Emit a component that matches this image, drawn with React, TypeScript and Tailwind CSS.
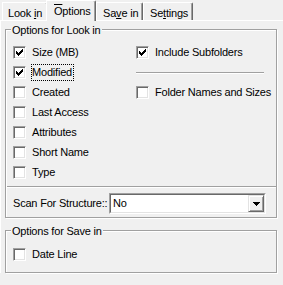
import React from 'react';

const CheckBox: React.FC<{ checked?: boolean }> = ({ checked }) => (
  <span className="relative mt-[4px] box-border block h-[13px] w-[13px] shrink-0 border border-t-[#a0a0a0] border-l-[#a0a0a0] border-r-white border-b-white bg-white shadow-[inset_1px_1px_0_#696969,inset_-1px_-1px_0_#e3e3e3]">
    {checked && (
      <svg className="absolute left-[2px] top-[2px]" width="7" height="7" viewBox="0 0 7 7" shapeRendering="crispEdges">
        <path d="M0 2h1v3H0zM1 3h1v3H1zM2 4h1v3H2zM3 3h1v3H3zM4 2h1v3H4zM5 1h1v3H5zM6 0h1v3H6z" fill="#000" />
      </svg>
    )}
  </span>
);

const Option: React.FC<{ label: React.ReactNode; checked?: boolean; focused?: boolean }> = ({ label, checked, focused }) => (
  <div className="flex h-[20px] items-start">
    <CheckBox checked={checked} />
    {focused ? (
      <span className="ml-[5px] mt-[2px] border border-dotted border-black pr-[1px] leading-[15px] whitespace-nowrap">{label}</span>
    ) : (
      <span className="ml-[6px] leading-[20px] whitespace-nowrap">{label}</span>
    )}
  </div>
);

const Separator: React.FC<{ className?: string }> = ({ className }) => (
  <div className={`box-border h-[2px] border-t border-b border-t-[#a0a0a0] border-b-white ${className ?? ''}`} />
);

const GroupBox: React.FC<{ title: string; className?: string; children: React.ReactNode }> = ({ title, className, children }) => (
  <div className={`relative box-border w-[272px] border border-[#a0a0a0] shadow-[inset_1px_1px_0_#fff,1px_1px_0_#fff] ${className ?? ''}`}>
    <span className="absolute left-[5px] top-[-6px] bg-[#f0f0f0] px-[1px] leading-[13px] whitespace-nowrap">{title}</span>
    {children}
  </div>
);

const tabBase =
  'box-border border-l border-t border-r border-l-white border-t-white border-r-[#696969] rounded-tr-[2px] pt-[4px] leading-[13px] whitespace-nowrap shadow-[inset_-1px_0_0_#a0a0a0]';

export default function App() {
  return (
    <div className="h-[285px] w-[283px] overflow-hidden bg-[#f0f0f0] font-['Liberation_Sans',Arial,sans-serif] text-[11px] leading-[13px] tracking-[-0.2px] text-black">
      {/* tabs */}
      <div className="flex h-[21px] items-end border-b border-white pl-[2px]">
        <div className={`${tabBase} h-[18px] w-[46px] pl-[5px]`}>
          Look <span className="underline">i</span>n
        </div>
        <div className={`${tabBase} relative z-10 -mb-[1px] -ml-[2px] h-[21px] w-[50px] bg-[#f0f0f0] pl-[7px]`}>
          <span className="overline">O</span>ptions
        </div>
        <div className={`${tabBase} h-[18px] w-[47px] pl-[6px]`}>
          Sa<span className="underline">v</span>e in
        </div>
        <div className={`${tabBase} h-[18px] w-[50px] pl-[6px]`}>
          Se<span className="underline">t</span>tings
        </div>
      </div>

      {/* page */}
      <div className="border-l border-white pl-[4px] pt-[8px]">
        <GroupBox title="Options for Look in" className="pb-[3px] pt-[12px]">
          <div className="flex">
            <div className="w-[123px] pl-[7px]">
              <Option label="Size (MB)" checked />
              <Option label="Modified" checked focused />
              <Option label="Created" />
              <Option label="Last Access" />
              <Option label="Attributes" />
              <Option label="Short Name" />
              <Option label="Type" />
            </div>
            <div className="w-[128px] pl-[7px]">
              <Option label="Include Subfolders" checked />
              <div className="h-[20px] pt-[10px]">
                <Separator className="w-[128px]" />
              </div>
              <Option label="Folder Names and Sizes" />
            </div>
          </div>
          <Separator className="ml-[1px] mt-[4px]" />
          <div className="mt-[5px] flex h-[21px] items-center pl-[7px]">
            <span className="w-[96px] whitespace-nowrap">Scan For Structure::</span>
            <div className="box-border h-[21px] w-[157px] border border-t-[#a0a0a0] border-l-[#a0a0a0] border-r-white border-b-white">
              <div className="box-border flex h-full border border-t-[#696969] border-l-[#696969] border-r-[#e3e3e3] border-b-[#e3e3e3] bg-white">
                <span className="flex-1 pl-[2px] leading-[17px]">No</span>
                <div className="box-border flex h-[17px] w-[16px] items-center justify-center border border-t-[#e3e3e3] border-l-[#e3e3e3] border-r-[#696969] border-b-[#696969] bg-[#f0f0f0] shadow-[inset_1px_1px_0_#fff,inset_-1px_-1px_0_#a0a0a0]">
                  <svg width="7" height="4" viewBox="0 0 7 4" shapeRendering="crispEdges">
                    <path d="M0 0h7v1H0zM1 1h5v1H1zM2 2h3v1H2zM3 3h1v1H3z" fill="#000" />
                  </svg>
                </div>
              </div>
            </div>
          </div>
        </GroupBox>

        <GroupBox title="Options for Save in" className="mt-[12px] pb-[8px] pt-[13px]">
          <div className="pl-[7px]">
            <Option label="Date Line" />
          </div>
        </GroupBox>
      </div>
    </div>
  );
}
